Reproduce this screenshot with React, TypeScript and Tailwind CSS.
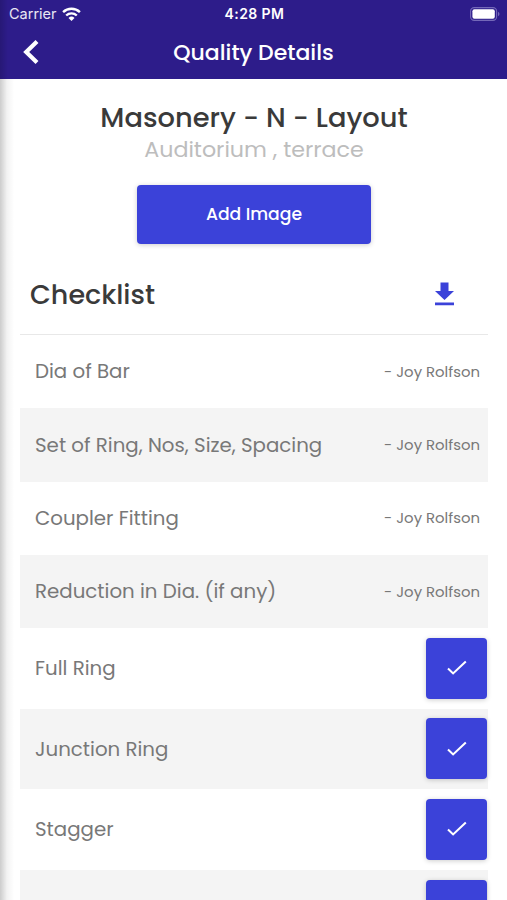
import React from 'react';

type Item = { label: string; by?: string };

const items: Item[] = [
  { label: 'Dia of Bar', by: '- Joy Rolfson' },
  { label: 'Set of Ring, Nos, Size, Spacing', by: '- Joy Rolfson' },
  { label: 'Coupler Fitting', by: '- Joy Rolfson' },
  { label: 'Reduction in Dia. (if any)', by: '- Joy Rolfson' },
  { label: 'Full Ring' },
  { label: 'Junction Ring' },
  { label: 'Stagger' },
  { label: '' },
];

function StatusBar() {
  return (
    <div className="grid h-[27px] grid-cols-3 items-center pl-[9px] pr-[7px] font-['Inter',sans-serif] text-white">
      <div className="flex items-center gap-[5px]">
        <span className="text-[14.5px] text-white/90">Carrier</span>
        <svg width="19" height="14" viewBox="0 0 19 14" fill="none" stroke="currentColor" strokeWidth="2.4">
          <path d="M1.1 5.2a12 12 0 0 1 16.8 0" />
          <path d="M4.2 8.5a7.7 7.7 0 0 1 10.6 0" />
          <path d="M9.5 13.9 6.5 10.9a4.3 4.3 0 0 1 6 0z" fill="currentColor" stroke="none" />
        </svg>
      </div>
      <span className="whitespace-nowrap text-center text-[14px] font-semibold tracking-[0.4px]">4:28 PM</span>
      <svg className="justify-self-end" width="30" height="14" viewBox="0 0 30 14">
        <rect x="0.6" y="0.6" width="26" height="12.8" rx="3.6" fill="none" stroke="#7468b8" strokeWidth="1.1" />
        <rect x="2.4" y="2.3" width="22.4" height="9.4" rx="2" fill="#fff" />
        <path d="M28 4.8c2 .8 2 3.6 0 4.4z" fill="#7468b8" />
      </svg>
    </div>
  );
}

function CheckButton() {
  return (
    <button className="flex size-[61px] shrink-0 items-center justify-center rounded-[4px] bg-[#3b42d9] shadow-[0_1px_5px_rgba(0,0,0,0.2)]">
      <svg width="22" height="18" viewBox="0 0 22 18" fill="none" stroke="#fff" strokeWidth="2.1">
        <path d="m2 9.600 5.100 4.800L19.800 2.600" />
      </svg>
    </button>
  );
}

export default function App() {
  return (
    <div className="relative flex h-[900px] w-[507px] flex-col overflow-hidden bg-white font-['Poppins','Inter',sans-serif]">
      <header className="h-[79px] shrink-0 bg-[#2d1c8a]">
        <StatusBar />
        <div className="grid h-[50px] grid-cols-[60px_1fr_60px] items-center text-white">
          <svg className="ml-[22px]" width="18" height="26" viewBox="0 0 18 26" fill="none" stroke="currentColor" strokeWidth="4.2">
            <path d="M15 2.5 4.2 13 15 23.5" />
          </svg>
          <h1 className="text-center text-[22px] font-medium">Quality Details</h1>
        </div>
      </header>

      <main className="flex flex-col pl-[20px] pr-[19px]">
        <div className="flex flex-col items-center pt-[22px]">
          <h2 className="whitespace-nowrap text-[27.3px] font-medium leading-[34px] text-[#3a3a3a]">Masonery - N - Layout</h2>
          <p className="whitespace-nowrap pt-px text-[22.2px] leading-[28px] text-[#bdbdbd]">Auditorium , terrace</p>
          <button className="mt-[21px] h-[59px] w-[234px] rounded-[4px] bg-[#3b42d9] text-[17.2px] font-medium text-white shadow-[0_1px_5px_rgba(0,0,0,0.2)]">
            Add Image
          </button>
        </div>

        <div className="mt-[10px] flex h-[81px] items-center justify-between border-b border-[#e8e8e8] pl-[10px] pr-[34px]">
          <h2 className="pt-[2px] text-[27px] font-medium text-[#3a3a3a]">Checklist</h2>
          <svg width="19" height="24" viewBox="0 0 19 24" fill="#3b42d9">
            <path d="M5.5 0.5h8v8.5H19L9.5 18 0 9h5.5zM0 20.5h19v2.8H0z" />
          </svg>
        </div>

        <ul>
          {items.map((item, i) => (
            <li
              key={i}
              className={`flex items-center justify-between pl-[15px] ${i % 2 ? 'bg-[#f4f4f4]' : ''} ${item.by ? 'h-[73.25px] pr-[8px]' : 'h-[80.6px] pr-[0.6px]'}`}
            >
              <span className="whitespace-nowrap pt-px text-[19.8px] text-[#787878]">{item.label}</span>
              {item.by ? (
                <span className="whitespace-nowrap pt-px text-[14.9px] text-[#787878]">{item.by}</span>
              ) : (
                <CheckButton />
              )}
            </li>
          ))}
        </ul>
      </main>

      <div className="pointer-events-none absolute bottom-0 left-0 top-[79px] w-[14px] bg-gradient-to-r from-black/20 via-black/5 to-transparent" />
      <div className="pointer-events-none absolute left-0 top-0 h-[79px] w-[8px] bg-gradient-to-r from-black/15 to-transparent" />
    </div>
  );
}
